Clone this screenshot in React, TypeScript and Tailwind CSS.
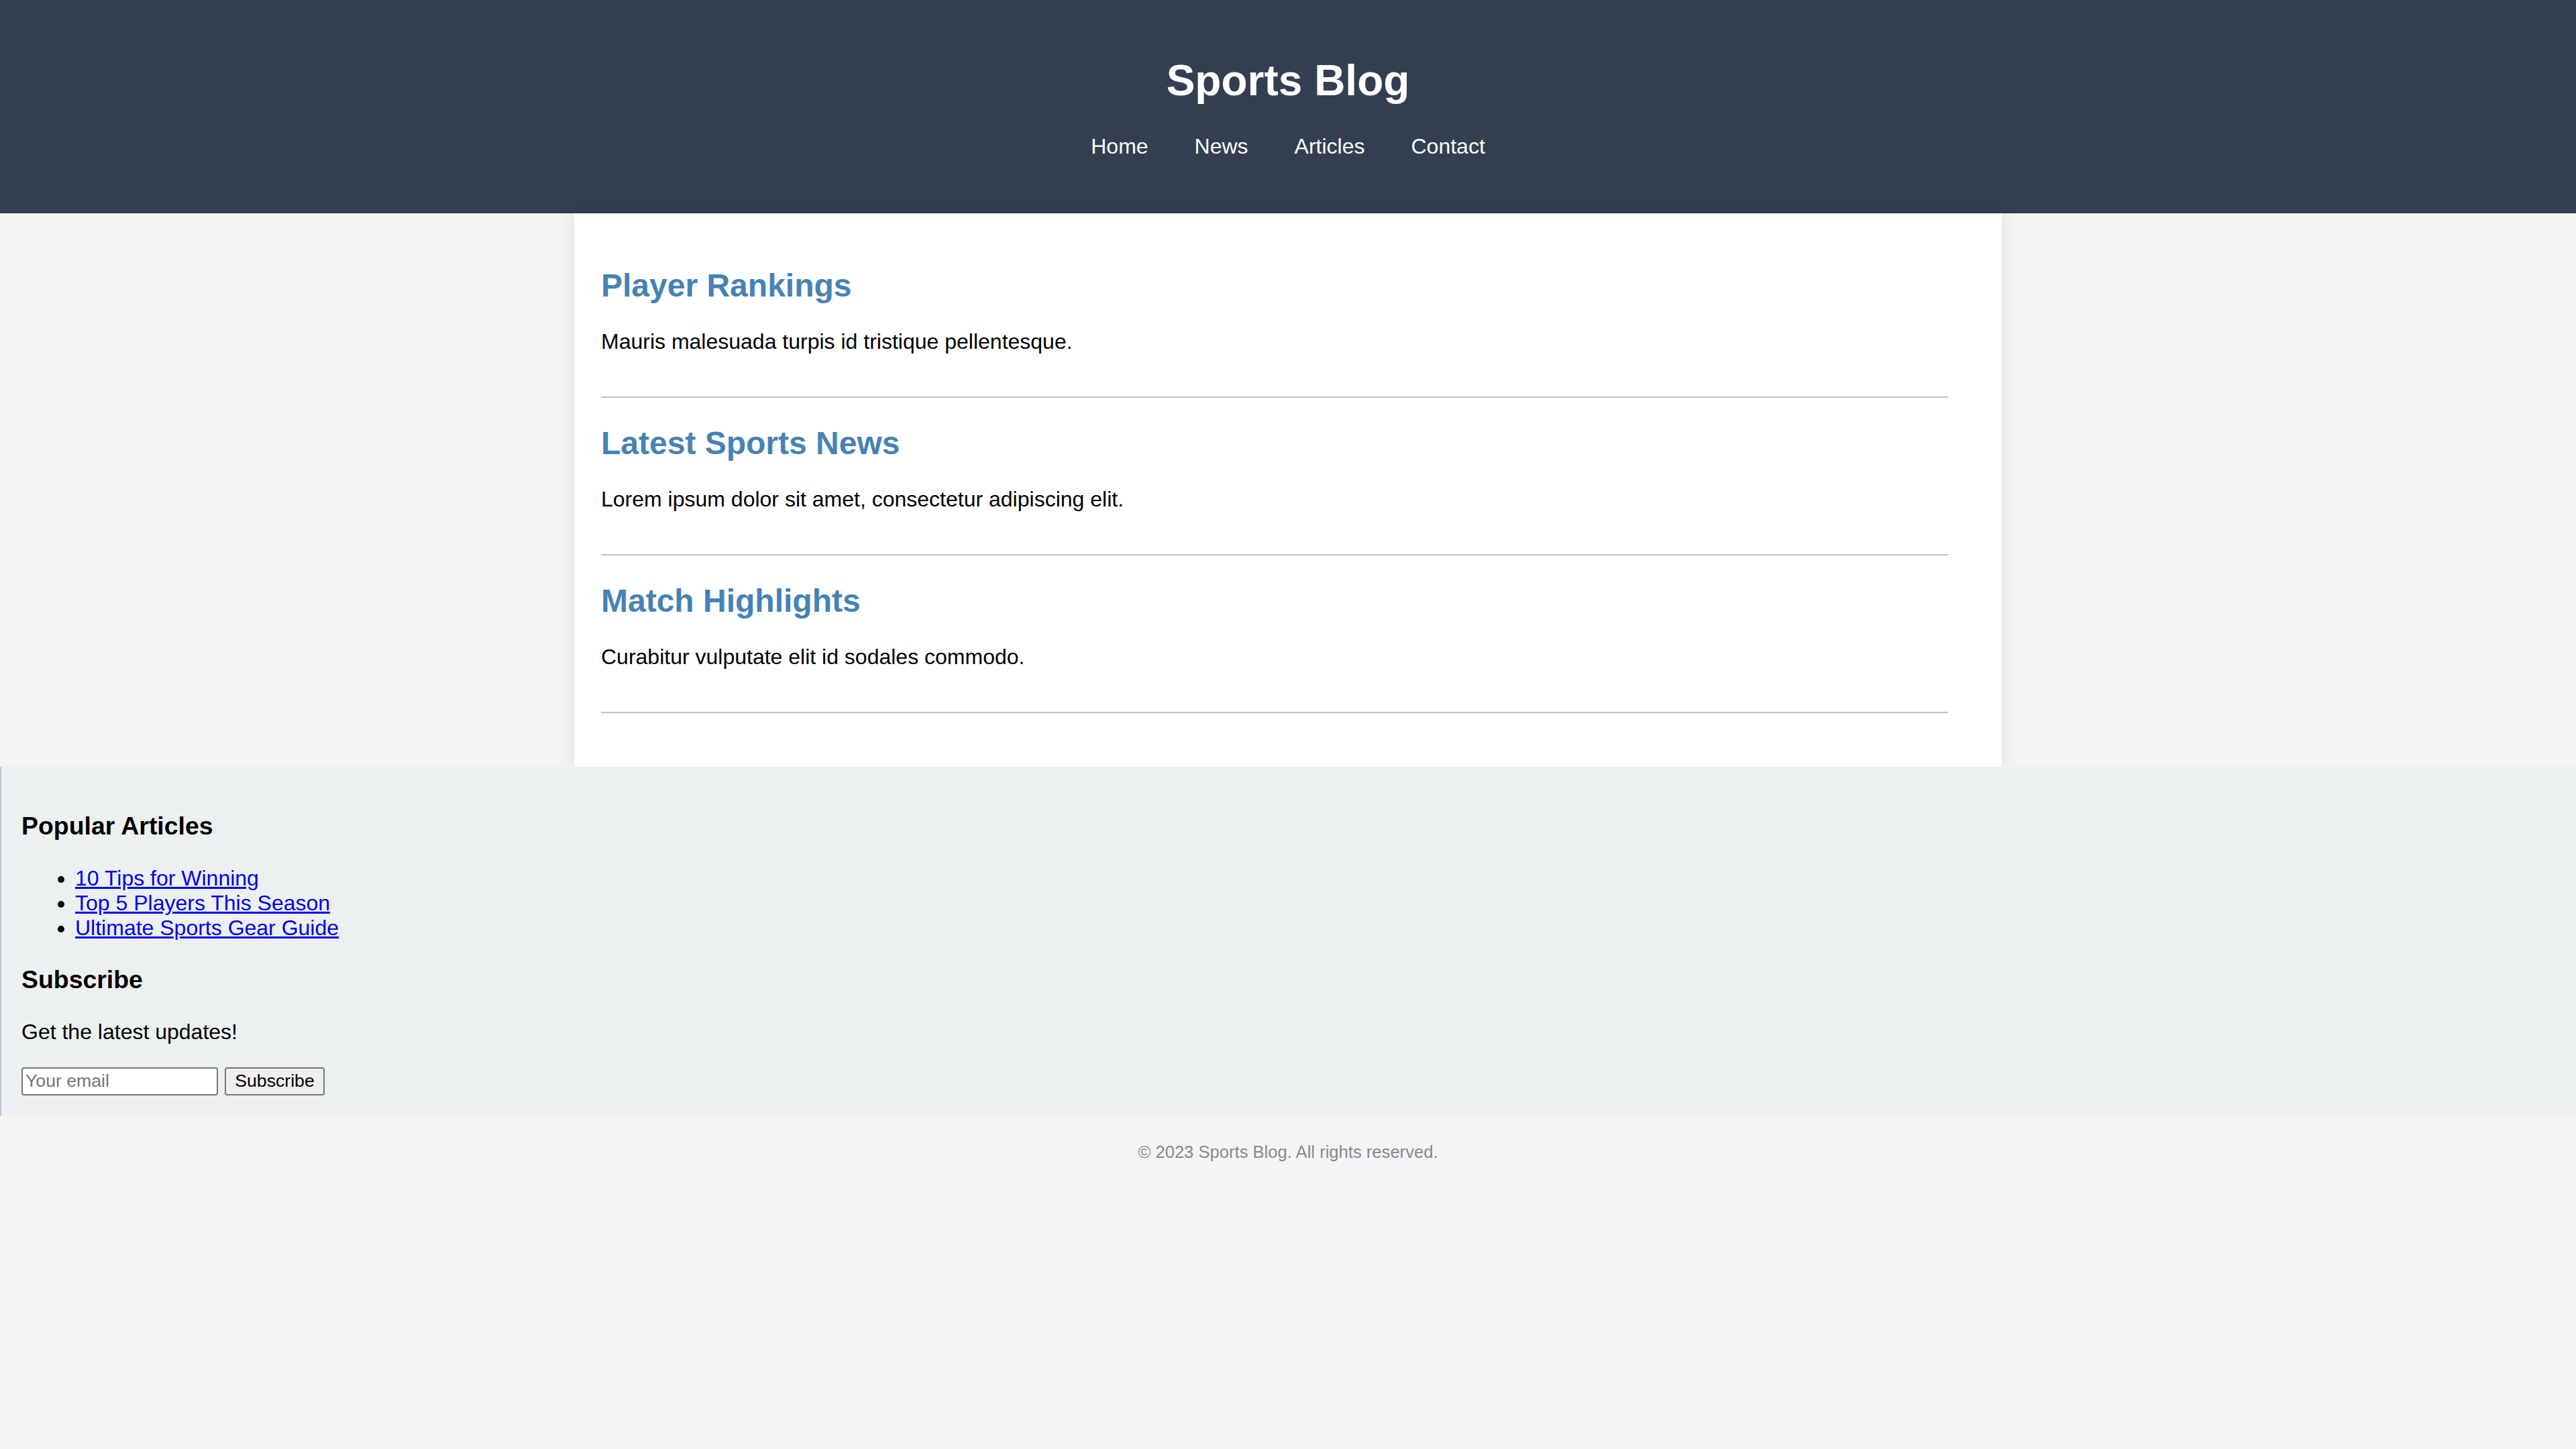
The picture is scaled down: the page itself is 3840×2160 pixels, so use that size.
import React from 'react';

const articles = [
  { title: 'Player Rankings', body: 'Mauris malesuada turpis id tristique pellentesque.' },
  { title: 'Latest Sports News', body: 'Lorem ipsum dolor sit amet, consectetur adipiscing elit.' },
  { title: 'Match Highlights', body: 'Curabitur vulputate elit id sodales commodo.' },
];

const popular = ['10 Tips for Winning', 'Top 5 Players This Season', 'Ultimate Sports Gear Guide'];

export default function App() {
  return (
    <div className="min-h-screen bg-[#f4f4f4] font-['Liberation_Sans',Arial,sans-serif] text-[32px] leading-[normal] text-black">
      {/* Header */}
      <header className="bg-[#333f50] text-white text-center pt-[40px] pb-[81px]">
        <h1 className="text-[64px] font-bold my-[43px]">Sports Blog</h1>
        <nav>
          <ul className="flex justify-center gap-[69px]">
            <li><a href="#" className="text-white">Home</a></li>
            <li><a href="#" className="text-white">News</a></li>
            <li><a href="#" className="text-white">Articles</a></li>
            <li><a href="#" className="text-white">Contact</a></li>
          </ul>
        </nav>
      </header>

      {/* Articles */}
      <main className="mx-auto w-[2128px] bg-white p-[40px] shadow-[0_0_20px_rgba(0,0,0,0.1)]">
        {articles.map((a) => (
          <article key={a.title} className="mr-[40px] mb-[40px] pb-[31px] border-b-2 border-[#bdc3c7]">
            <h2 className="text-[48px] font-bold text-[#4682b4] mt-[40px] mb-[38px]">{a.title}</h2>
            <p className="my-[32px]">{a.body}</p>
          </article>
        ))}
      </main>

      {/* Sidebar */}
      <aside className="bg-[#ecf0f1] border-l-2 border-[#bdc3c7] p-[30px]">
        <h3 className="text-[37.44px] font-bold my-[37.44px]">Popular Articles</h3>
        <ul className="list-disc pl-[80px] my-[32px]">
          {popular.map((p) => (
            <li key={p}>
              <a href="#" className="text-[#0000ee] underline">{p}</a>
            </li>
          ))}
        </ul>
        <h3 className="text-[37.44px] font-bold my-[37.44px]">Subscribe</h3>
        <p className="my-[32px]">Get the latest updates!</p>
        <form className="flex items-center gap-[10px] pt-[2px]">
          <input
            type="email"
            placeholder="Your email"
            className="w-[293px] h-[42px] border-2 border-[#767676] rounded-[4px] bg-white px-[4px] text-[26.67px] placeholder:text-[#757575]"
          />
          <button
            type="button"
            className="w-[149px] h-[42px] border-2 border-[#767676] rounded-[4px] bg-[#efefef] text-[26.67px] text-black"
          >
            Subscribe
          </button>
        </form>
      </aside>

      {/* Footer */}
      <footer className="text-center py-[40px] text-[25.6px] text-[#7f8c8d]">
        © 2023 Sports Blog. All rights reserved.
      </footer>
    </div>
  );
}
